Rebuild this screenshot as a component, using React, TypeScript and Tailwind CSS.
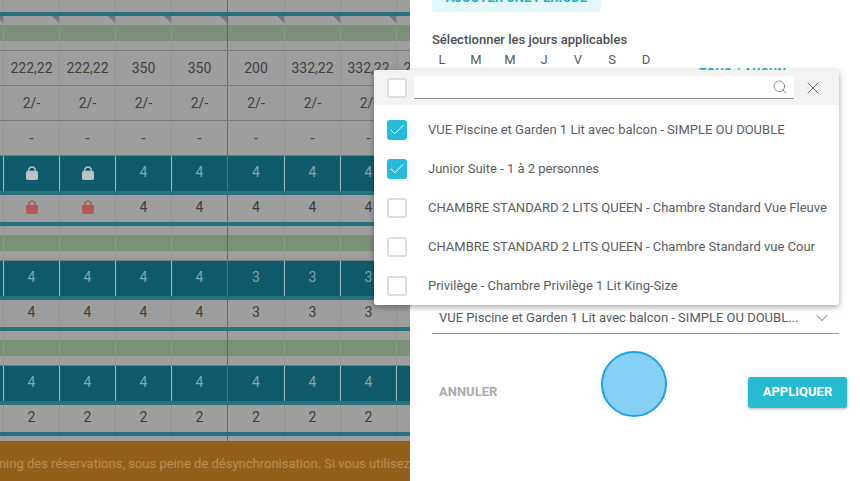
import React from "react";
import { Search, X, ChevronDown, Check } from "lucide-react";

const widths = ["w-[56px]", "w-[56px]", "w-[56px]", "w-[56px]", "w-[56px]", "w-[57px]", "w-[56px]", "w-[56px]", "w-[56px]"];

function Lock({ color }: { color: string }) {
  return (
    <svg width="12" height="14" viewBox="0 0 12 14">
      <path d="M2.8 6V4C2.8 2.2 4.2 1 6 1S9.2 2.2 9.2 4V6" fill="none" stroke={color} strokeWidth="1.5" />
      <rect x="0" y="4.8" width="12" height="9.2" rx="1.8" fill={color} />
    </svg>
  );
}

type Kind = "light" | "dark" | "green" | "plain";

function Row({
  kind,
  height,
  values,
  corners,
  lead,
  inset,
}: {
  kind: Kind;
  height: string;
  values?: React.ReactNode[];
  corners?: boolean;
  lead?: string;
  inset?: string;
}) {
  const bg = kind === "dark" ? "bg-[#0f5b6b]" : kind === "green" ? "bg-[#7c9079]" : "bg-[#9e9e9e]";
  const text = kind === "dark" ? "text-[#7fa6af]" : "text-[#404040]";
  const line = kind === "dark" ? "border-[#a3bcc2]" : kind === "green" ? "border-[#8a9c87]" : "border-[#939393]";
  return (
    <div className={`flex shrink-0 ${height} ${bg} ${lead ?? ""}`}>
      {widths.map((w, i) => (
        <div
          key={i}
          className={`${w} relative flex shrink-0 items-center justify-center border-r text-[14px] ${inset ?? ""} ${text} ${
            i === 4 ? "border-[#666666]" : line
          }`}
        >
          {values?.[i]}
          {corners && (
            <span className="absolute right-0 top-0 h-[7px] w-[7px] bg-[#6e7d7c] [clip-path:polygon(0_0,100%_0,100%_100%)]" />
          )}
        </div>
      ))}
    </div>
  );
}

function Bar() {
  return <div className="h-[4px] shrink-0 bg-[#27727e]" />;
}

function Spacer({ corners }: { corners?: boolean }) {
  return <Row kind="plain" height="h-[9px]" corners={corners} />;
}

function row(...v: React.ReactNode[]) {
  return ["", ...v];
}

const Head = ({ corners }: { corners?: boolean }) => (
  <>
    <Bar />
    <Spacer corners={corners} />
    <Row kind="green" height="h-[16px]" />
    <Spacer />
    <div className="h-px shrink-0 bg-[#7c7c7c]" />
  </>
);

function Box({ checked }: { checked?: boolean }) {
  return checked ? (
    <span className="flex h-5 w-5 shrink-0 items-center justify-center rounded-[3px] bg-[#26bcd7]">
      <Check size={18} strokeWidth={1.3} className="text-white" />
    </span>
  ) : (
    <span className="h-5 w-5 shrink-0 rounded-[3px] border-2 border-[#dedede] bg-white" />
  );
}

const rooms: [string, boolean][] = [
  ["VUE Piscine et Garden 1 Lit avec balcon - SIMPLE OU DOUBLE", true],
  ["Junior Suite - 1 à 2 personnes", true],
  ["CHAMBRE STANDARD 2 LITS QUEEN - Chambre Standard Vue Fleuve", false],
  ["CHAMBRE STANDARD 2 LITS QUEEN - Chambre Standard vue Cour", false],
  ["Privilège - Chambre Privilège 1 Lit King-Size", false],
];

export default function App() {
  const lockW = <Lock color="#bcc1c2" />;
  const lockR = <Lock color="#b55858" />;
  return (
    <div className="relative flex h-[481px] w-[860px] overflow-hidden bg-white font-['Roboto',sans-serif]">
      <div className="flex h-full w-[410px] shrink-0 flex-col overflow-hidden">
        <div className="ml-[-52px] flex min-h-0 w-[509px] flex-1 flex-col overflow-hidden">
          <Row kind="plain" height="h-[34px]" lead="-mt-[22px]" values={row("1", "2", "2", "2", "2", "2", "1")} />
          <Head corners />
          <Row kind="light" height="h-[34px]" values={row("222,22", "222,22", "350", "350", "200", "332,22", "332,22", "222,22")} />
          <div className="h-px shrink-0 bg-[#7c7c7c]" />
          <Row kind="light" height="h-[34px]" values={row("2/-", "2/-", "2/-", "2/-", "2/-", "2/-", "2/-")} />
          <div className="h-px shrink-0 bg-[#7c7c7c]" />
          <Row kind="light" height="h-[34px]" values={row("-", "-", "-", "-", "-", "-", "-")} />
          <div className="h-px shrink-0 bg-[#7c7c7c]" />
          <Row kind="dark" height="h-[35px]" values={row(lockW, lockW, "4", "4", "4", "4", "4")} inset="pb-[2px]" />
          <Bar />
          <Row kind="light" height="h-[27px]" values={row(lockR, lockR, "4", "4", "4", "4", "4")} inset="pb-[3px]" />
          <Head />
          <Row kind="dark" height="h-[35px]" values={row("4", "4", "4", "4", "3", "3", "3")} inset="pb-[2px]" />
          <Bar />
          <Row kind="light" height="h-[27px]" values={row("4", "4", "4", "4", "3", "3", "3")} inset="pb-[3px]" />
          <Head />
          <Row kind="dark" height="h-[35px]" values={row("4", "4", "4", "4", "4", "4", "4")} inset="pb-[2px]" />
          <Bar />
          <Row kind="light" height="h-[27px]" values={row("2", "2", "2", "2", "2", "2", "2")} inset="pb-[3px]" />
          <Bar />
          <Row kind="plain" height="h-[5px]" />
        </div>
        <div className="flex h-[40px] shrink-0 items-center justify-end overflow-hidden whitespace-nowrap bg-[#93601b] pt-[5px] text-[13px] text-[#b58e55]">
          ning des réservations, sous peine de désynchronisation. Si vous utilisez
        </div>
      </div>

      <div className="flex min-w-0 flex-1 flex-col pl-[22px] pr-[21px]">
        <div className="-mt-[20px] flex h-[32px] w-[169px] items-center justify-center rounded-[4px] bg-[#e3f6f9] pt-[3px] text-[13px] font-bold text-[#1fb0c5]">
          AJOUTER UNE PÉRIODE
        </div>
        <div className="mt-[20px] text-[13px] font-medium leading-[15px] text-[#4a4f55]">
          Sélectionner les jours applicables
        </div>
        <div className="-ml-[7px] mt-[5px] flex h-[16px] text-[13px] leading-[16px] text-[#555a60]">
          {["L", "M", "M", "J", "V", "S", "D"].map((d, i) => (
            <span key={i} className="w-[34px] shrink-0 text-center">
              {d}
            </span>
          ))}
          <span className="ml-[36px] mt-[13px] whitespace-nowrap text-[12px] font-bold tracking-[0.5px] text-[#26b3c9]">TOUS / AUCUN</span>
        </div>
        <div className="mt-[238px] flex h-[28px] items-start justify-between border-b border-[#9a9a9a] pl-[7px] pr-[7px] pt-[4px] text-[13px] leading-[16px] text-[#55595e]">
          <span className="whitespace-nowrap">VUE Piscine et Garden 1 Lit avec balcon - SIMPLE OU DOUBL...</span>
          <ChevronDown size={20} strokeWidth={1.1} className="-mt-[2px] text-[#555]" />
        </div>
        <div className="-mr-[8px] mt-[43px] flex items-center justify-between">
          <span className="pb-[2px] pl-[7px] text-[13px] font-bold text-[#acacac]">ANNULER</span>
          <span className="flex h-[31px] w-[99px] items-center justify-center rounded-[3px] bg-[#26bbd0] pb-[1px] text-[13px] font-bold text-white shadow-[0_1px_3px_rgba(0,0,0,0.3)]">
            APPLIQUER
          </span>
        </div>
      </div>

      <div className="absolute left-[374px] top-[70px] h-[235px] w-[465px] rounded-[3px] bg-white shadow-[0_2px_6px_rgba(0,0,0,0.35)]">
        <div className="flex h-[35px] items-center rounded-t-[3px] bg-[#f3f3f3] pl-[13px]">
          <Box />
          <div className="ml-[7px] flex h-[23px] w-[380px] items-center justify-end border-b border-[#8d8d8d] bg-white pr-[6px]">
            <Search size={16} strokeWidth={1} className="text-[#555]" />
          </div>
          <X size={20} strokeWidth={1.1} className="ml-[9px] text-[#555]" />
        </div>
        <div className="flex flex-col gap-[19px] pl-[13px] pt-[15px]">
          {rooms.map(([name, on]) => (
            <div key={name} className="flex h-5 items-center gap-[21px]">
              <Box checked={on} />
              <span className="whitespace-nowrap text-[13px] text-[#5a5e63]">{name}</span>
            </div>
          ))}
        </div>
      </div>

      <div className="absolute left-[601px] top-[351px] h-[66px] w-[66px] rounded-full border-[2.5px] border-[#1ea1e6] bg-[#86cff5]" />
    </div>
  );
}
